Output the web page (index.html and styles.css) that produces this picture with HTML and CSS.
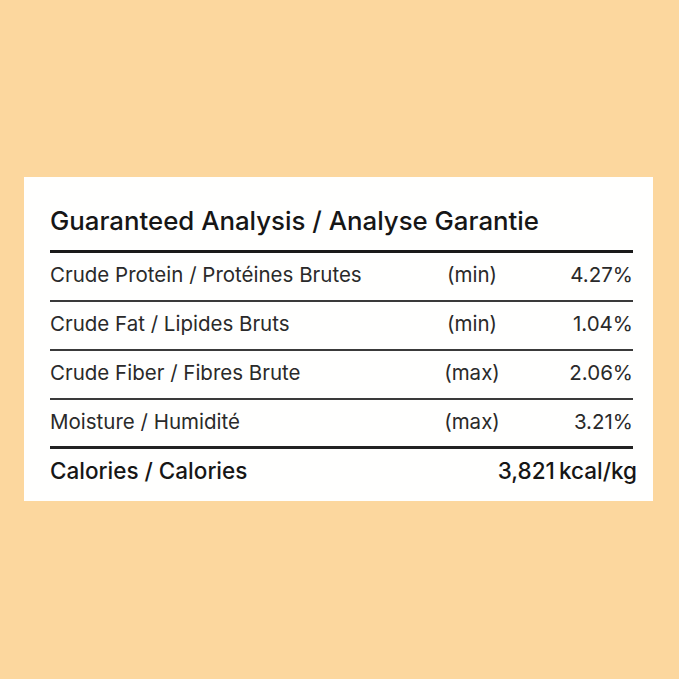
FILE: index.html
```html
<!DOCTYPE html>
<html>
<head>
<meta charset="utf-8">
<link rel="stylesheet" href="styles.css">
</head>
<body>
<div class="card">
  <h1 class="title">Guaranteed Analysis / Analyse Garantie</h1>
  <div class="row">
    <span class="name">Crude Protein / Protéines Brutes</span>
    <span class="qual">(min)</span>
    <span class="val">4.27%</span>
  </div>
  <div class="row">
    <span class="name">Crude Fat / Lipides Bruts</span>
    <span class="qual">(min)</span>
    <span class="val">1.04%</span>
  </div>
  <div class="row">
    <span class="name">Crude Fiber / Fibres Brute</span>
    <span class="qual">(max)</span>
    <span class="val">2.06%</span>
  </div>
  <div class="row row-last">
    <span class="name">Moisture / Humidité</span>
    <span class="qual">(max)</span>
    <span class="val">3.21%</span>
  </div>
  <div class="row total">
    <span class="name">Calories / Calories</span>
    <span class="val">3,821 kcal/kg</span>
  </div>
</div>
</body>
</html>
```

FILE: styles.css
```css
html, body {
  margin: 0;
  padding: 0;
}
body {
  background: #fcd79e;
  width: 679px;
  height: 679px;
  font-family: Inter, "Noto Sans", sans-serif;
  color: #1c1c1c;
}
.card {
  margin: 177px 0 0 24px;
  width: 629px;
  height: 324px;
  box-sizing: border-box;
  background: #fffffe;
  padding: 0 20px 0 26px;
}
.title {
  margin: 0;
  padding-top: 29px;
  height: 44px;
  box-sizing: content-box;
  font-size: 25.8px;
  font-weight: 500;
  line-height: 30px;
  letter-spacing: 0;
  border-bottom: 3px solid #1a1a1a;
  color: #161616;
}
.row {
  display: grid;
  grid-template-columns: 1fr 80px 121px;
  align-items: center;
  height: 47px;
  border-bottom: 2px solid #3a3a3a;
  font-size: 20.5px;
  line-height: 24px;
  color: #2a2a2a;
  padding-bottom: 3px;
  box-sizing: border-box;
  height: 49px;
}
.row-last {
  border-bottom: 3px solid #222;
}
.qual {
  text-align: center;
}
.val {
  text-align: right;
}
.total {
  border-bottom: none;
  font-weight: 500;
  color: #161616;
  font-size: 22.5px;
  padding-bottom: 5px;
}
.total .val {
  grid-column: 2 / 4;
  justify-self: end;
  margin-right: -4px;
  white-space: nowrap;
  word-spacing: -2px;
}
```
